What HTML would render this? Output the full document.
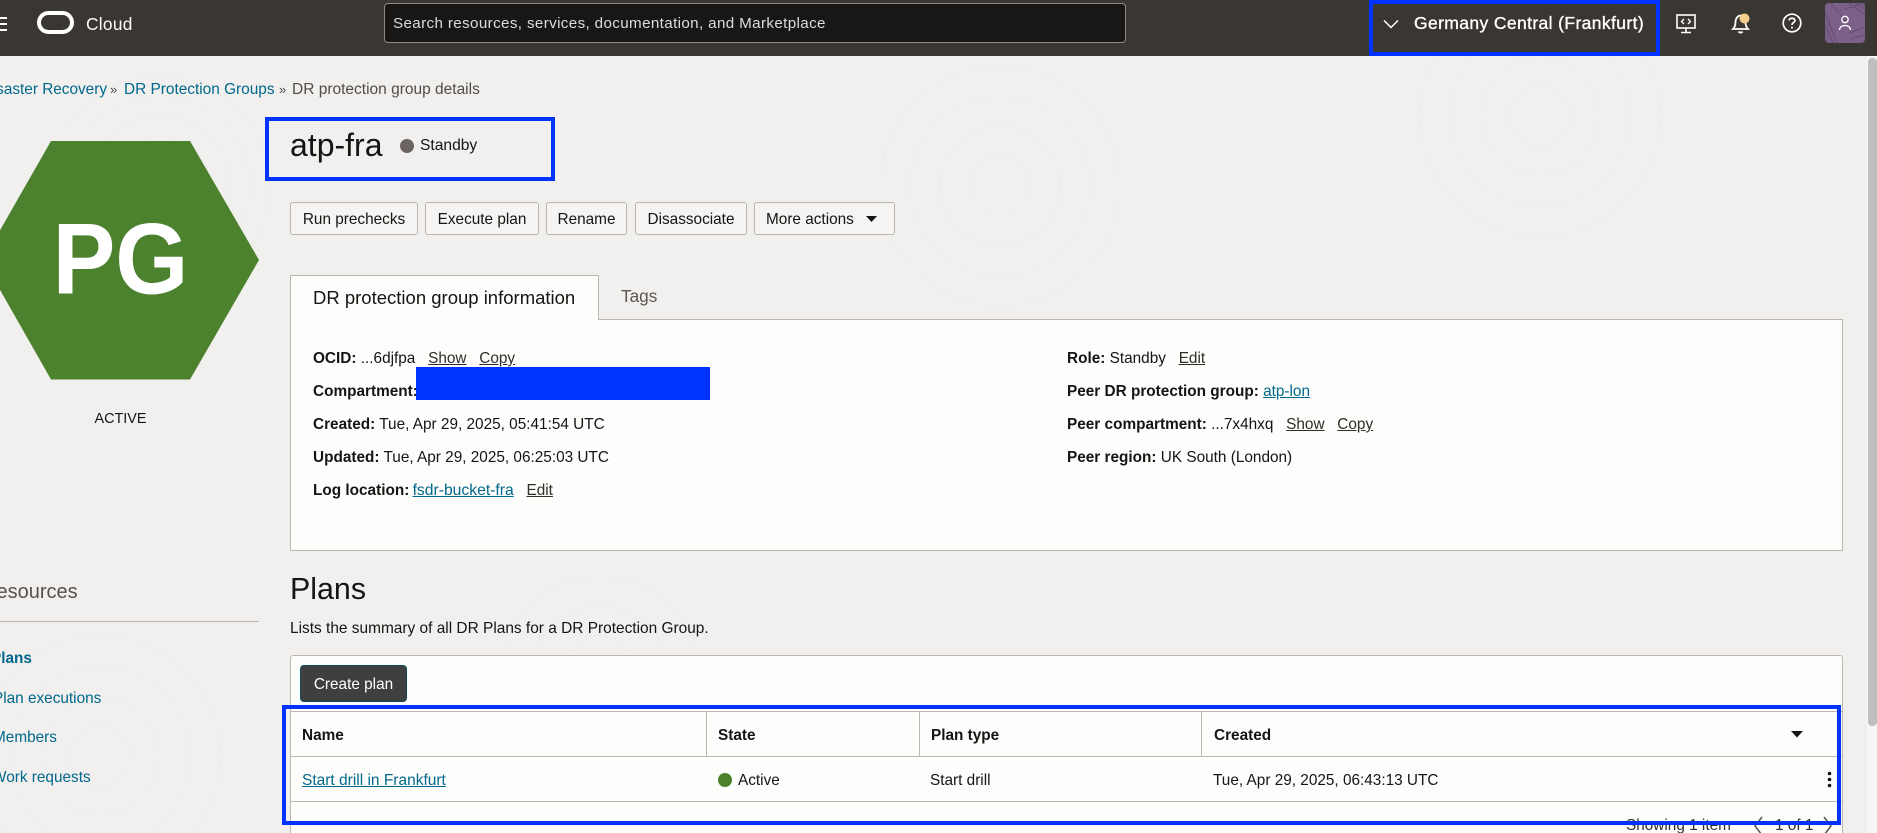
<!DOCTYPE html>
<html lang="en"><head><meta charset="utf-8"><title>DR protection group details</title>
<style>
html,body{margin:0;padding:0;width:1877px;height:833px;overflow:hidden;background:#f1f0ee}
body{position:relative;font-family:"Liberation Sans",sans-serif;font-size:15.35px;color:#161513}
.a{position:absolute;white-space:nowrap}
.t{position:absolute;white-space:nowrap;line-height:20px;height:20px}
b{font-weight:700}
a{color:#00688c;text-decoration:underline}
a.g{color:#312d2a;margin-left:8.5px}
.btn{position:absolute;box-sizing:border-box;top:202px;height:33px;background:#f5f4f2;border:1px solid #b9b5b0;border-radius:3px;text-align:center;line-height:34px;white-space:nowrap}
.blue{position:absolute;box-sizing:border-box;border:4px solid #0033ff}
.s{color:#00688c}
</style></head><body>
<svg class="a" style="left:0;top:56px" width="1867" height="777" fill="none" stroke="#eeedeb" stroke-width="1.5">
<g><circle cx="160" cy="130" r="30"/><circle cx="160" cy="130" r="50"/><circle cx="160" cy="130" r="70"/><circle cx="160" cy="130" r="90"/><circle cx="160" cy="130" r="110"/></g>
<g><circle cx="100" cy="700" r="30"/><circle cx="100" cy="700" r="60"/><circle cx="100" cy="700" r="90"/><circle cx="100" cy="700" r="120"/></g>
<g><circle cx="1000" cy="130" r="30"/><circle cx="1000" cy="130" r="60"/><circle cx="1000" cy="130" r="90"/><circle cx="1000" cy="130" r="120"/></g>
<g><circle cx="1540" cy="60" r="30"/><circle cx="1540" cy="60" r="60"/><circle cx="1540" cy="60" r="90"/><circle cx="1540" cy="60" r="120"/></g>
<g><circle cx="600" cy="620" r="40"/><circle cx="600" cy="620" r="70"/><circle cx="600" cy="620" r="100"/></g>
</svg>

<!-- header -->
<div class="a" style="left:0;top:0;width:1877px;height:56px;background:#3a3632"></div>
<div class="a" style="left:0;top:17px;width:7px;height:2px;background:#fff"></div>
<div class="a" style="left:0;top:23px;width:7px;height:2px;background:#fff"></div>
<div class="a" style="left:0;top:29px;width:7px;height:2px;background:#fff"></div>
<div class="a" style="left:37px;top:11px;width:37px;height:23px;box-sizing:border-box;border:4.5px solid #fff;border-radius:12px"></div>
<div class="t" style="left:86px;top:14px;color:#fff;font-size:17.3px;letter-spacing:.3px">Cloud</div>
<div class="a" style="left:384px;top:3px;width:742px;height:40px;box-sizing:border-box;background:#181716;border:1px solid #8d8985;border-radius:4px"></div>
<div class="t" style="left:393px;top:14px;color:#dedcda;font-size:15.2px;letter-spacing:.36px">Search resources, services, documentation, and Marketplace</div>
<svg class="a" style="left:1383px;top:18px" width="16" height="12" fill="none" stroke="#fff" stroke-width="1.5"><path d="M1 2.5 L8 9.5 L15 2.5"/></svg>
<div class="t" style="left:1414px;top:13px;color:#fff;font-size:17.5px;font-weight:400;letter-spacing:.38px;-webkit-text-stroke:.35px #fff">Germany Central (Frankfurt)</div>
<svg class="a" style="left:1675px;top:13px" width="22" height="21" fill="none" stroke="#fff" stroke-width="1.6"><rect x="2" y="2" width="18" height="13"/><path d="M11 15V19M6 19.5H16" /><path d="M9 6 L6.5 8.5 L9 11M13 6 L15.5 8.5 L13 11" stroke-width="1.3"/></svg>
<svg class="a" style="left:1731px;top:13px" width="20" height="22" fill="none" stroke="#fff" stroke-width="1.8"><path d="M2 16 C4 14 4.5 12 4.5 9 C4.5 5.5 7 2.5 9.5 2.5 C12 2.5 14.5 5.5 14.5 9 C14.5 12 15 14 17 16 Z"/><path d="M7.5 18.5 C8.5 20 10.5 20 11.5 18.5"/><circle cx="13.5" cy="5.5" r="5" fill="#f5cf8a" stroke="none"/></svg>
<svg class="a" style="left:1781px;top:12px" width="22" height="22" fill="none" stroke="#fff" stroke-width="1.7"><circle cx="11" cy="11" r="8.8"/><path d="M8 8.5 C8 5.5 14 5.5 14 8.5 C14 10.5 11 10.5 11 13"/><circle cx="11" cy="15.6" r="1" fill="#fff" stroke="none"/></svg>
<svg class="a" style="left:1825px;top:3px" width="40" height="40"><rect width="40" height="40" rx="4" fill="#7c6089"/><g fill="none" stroke="#6c5179" stroke-width="1.5"><path d="M0 10 L12 40M0 22 L8 40M6 0 L22 20M24 0 L40 12M30 0 L40 6M24 30 L40 24M26 36 L40 32M20 6 L40 0"/></g><g fill="none" stroke="#fff" stroke-width="1.3"><circle cx="20" cy="16.5" r="3.2"/><path d="M14.5 27 C14.5 21 25.5 21 25.5 27"/></g></svg>
<div class="blue" style="left:1369px;top:0;width:291px;height:56px"></div>

<!-- scrollbar -->
<div class="a" style="left:1867px;top:56px;width:10px;height:777px;background:#f6f6f5"></div>
<div class="a" style="left:1868px;top:58px;width:9px;height:668px;background:#bfbfbf;border-radius:4px"></div>

<!-- breadcrumb -->
<div class="a" style="left:0;top:80px;width:107px;height:20px;overflow:hidden"><span class="a" style="right:0;top:0;line-height:20px;color:#00688c">Disaster Recovery</span></div>
<div class="t" style="left:110px;top:80px;color:#4a4a48;font-size:13px">»</div>
<div class="t" style="left:124px;top:80px;color:#00688c;font-size:15.4px">DR Protection Groups</div>
<div class="t" style="left:279px;top:80px;color:#4a4a48;font-size:13px">»</div>
<div class="t" style="left:292px;top:80px;color:#504c49;font-size:15.5px">DR protection group details</div>

<!-- hexagon -->
<svg class="a" style="left:0;top:141px" width="260" height="239"><polygon points="-17,119 51,0 190,0 259,119 190,238.5 51,238.5" fill="#4c822e"/></svg>
<div class="a" style="left:0;top:200px;width:241px;text-align:center;line-height:118px;font-size:94px;font-weight:700;color:#fff;transform:scaleY(1.08)">PG</div>
<div class="a" style="left:0;top:409px;width:241px;text-align:center;line-height:20px;font-size:14.4px">ACTIVE</div>

<!-- title -->
<div class="a" style="left:290px;top:125px;line-height:40px;font-size:32px">atp-fra</div>
<div class="a" style="left:400px;top:139px;width:14px;height:14px;border-radius:50%;background:#6b6460"></div>
<div class="t" style="left:420px;top:136px;font-size:15.6px">Standby</div>
<div class="blue" style="left:265px;top:117px;width:290px;height:64px"></div>

<!-- buttons -->
<div class="btn" style="left:290px;width:128px">Run prechecks</div>
<div class="btn" style="left:425px;width:114px">Execute plan</div>
<div class="btn" style="left:546px;width:81px">Rename</div>
<div class="btn" style="left:635px;width:112px">Disassociate</div>
<div class="btn" style="left:754px;width:141px;text-align:left;padding-left:11px">More actions</div>
<svg class="a" style="left:866px;top:216px" width="11" height="7"><path d="M0 0H11L5.5 6Z" fill="#161513"/></svg>

<!-- info panel -->
<div class="a" style="left:290px;top:319px;width:1553px;height:232px;box-sizing:border-box;background:#fdfdfb;border:1px solid #bcb6b1"></div>
<div class="a" style="left:290px;top:275px;width:309px;height:45px;box-sizing:border-box;background:#fdfdfb;border:1px solid #bcb6b1;border-bottom:0"></div>
<div class="t" style="left:313px;top:288px;font-size:18.5px">DR protection group information</div>
<div class="t" style="left:621px;top:286px;font-size:17.2px;color:#5a5652">Tags</div>

<div class="t" style="left:313px;top:349px"><b>OCID:</b> ...6djfpa <a class="g">Show</a> <a class="g">Copy</a></div>
<div class="t" style="left:313px;top:382px"><b>Compartment:</b></div>
<div class="a" style="left:416px;top:367px;width:294px;height:33px;background:#0033ff"></div>
<div class="t" style="left:313px;top:415px"><b>Created:</b> Tue, Apr 29, 2025, 05:41:54 UTC</div>
<div class="t" style="left:313px;top:448px"><b>Updated:</b> Tue, Apr 29, 2025, 06:25:03 UTC</div>
<div class="t" style="left:313px;top:481px"><b>Log location:</b> <a style="font-size:15.7px;margin-left:-1px">fsdr-bucket-fra</a> <a class="g">Edit</a></div>

<div class="t" style="left:1067px;top:349px"><b>Role:</b> Standby <a class="g">Edit</a></div>
<div class="t" style="left:1067px;top:382px"><b>Peer DR protection group:</b> <a>atp-lon</a></div>
<div class="t" style="left:1067px;top:415px"><b>Peer compartment:</b> ...7x4hxq <a class="g">Show</a> <a class="g">Copy</a></div>
<div class="t" style="left:1067px;top:448px"><b>Peer region:</b> UK South (London)</div>

<!-- sidebar -->
<div class="a" style="left:-18px;top:580px;line-height:24px;font-size:20px;color:#55514d">Resources</div>
<div class="a" style="left:0;top:621px;width:259px;height:1px;background:#b9b5b0"></div>
<div class="t s" style="left:-9px;top:649px;font-weight:700">Plans</div>
<div class="t s" style="left:-7px;top:689px">Plan executions</div>
<div class="t s" style="left:-7px;top:728px">Members</div>
<div class="t s" style="left:-8px;top:768px">Work requests</div>

<!-- plans -->
<div class="a" style="left:290px;top:571px;line-height:36px;font-size:30.4px">Plans</div>
<div class="t" style="left:290px;top:619px;font-size:15.45px">Lists the summary of all DR Plans for a DR Protection Group.</div>

<div class="a" style="left:290px;top:655px;width:1553px;height:178px;box-sizing:border-box;background:#fdfdfb;border:1px solid #bcb6b1;border-bottom:0;border-radius:3px 3px 0 0"></div>
<div class="a" style="left:300px;top:665px;width:107px;height:37px;box-sizing:border-box;background:#3f3f3e;border:1.5px solid #0e4a5c;border-radius:4px;color:#fff;text-align:center;line-height:37px">Create plan</div>

<div class="a" style="left:291px;top:711px;width:1551px;height:1px;background:#bcb6b1"></div>
<div class="a" style="left:291px;top:756px;width:1551px;height:1px;background:#bcb6b1"></div>
<div class="a" style="left:291px;top:801px;width:1551px;height:1px;background:#bcb6b1"></div>
<div class="a" style="left:706px;top:712px;width:1px;height:44px;background:#bcb6b1"></div>
<div class="a" style="left:919px;top:712px;width:1px;height:44px;background:#bcb6b1"></div>
<div class="a" style="left:1201px;top:712px;width:1px;height:44px;background:#bcb6b1"></div>
<div class="t" style="left:302px;top:726px"><b>Name</b></div>
<div class="t" style="left:718px;top:726px"><b>State</b></div>
<div class="t" style="left:931px;top:726px"><b>Plan type</b></div>
<div class="t" style="left:1214px;top:726px"><b>Created</b></div>
<svg class="a" style="left:1791px;top:731px" width="12" height="7"><path d="M0 0H12L6 6.5Z" fill="#161513"/></svg>
<div class="t" style="left:302px;top:771px;font-size:15.5px"><a>Start drill in Frankfurt</a></div>
<div class="a" style="left:718px;top:773px;width:14px;height:14px;border-radius:50%;background:#4c822e"></div>
<div class="t" style="left:738px;top:771px">Active</div>
<div class="t" style="left:930px;top:771px">Start drill</div>
<div class="t" style="left:1213px;top:771px">Tue, Apr 29, 2025, 06:43:13 UTC</div>
<svg class="a" style="left:1827px;top:771px" width="5" height="17" fill="#161513"><circle cx="2.5" cy="2.5" r="1.8"/><circle cx="2.5" cy="8.5" r="1.8"/><circle cx="2.5" cy="14.5" r="1.8"/></svg>

<div class="a" style="left:1600px;top:810px;width:260px;height:23px;overflow:hidden">
<div class="t" style="left:26px;top:6px;color:#312d2a">Showing 1 item</div>
<div class="t" style="left:175px;top:6px;color:#312d2a">1 of 1</div>
</div>
<svg class="a" style="left:1752px;top:815px" width="13" height="18" fill="none" stroke="#5a5652" stroke-width="1.5"><path d="M10 2 L3 11 L10 20"/></svg>
<svg class="a" style="left:1821px;top:815px" width="13" height="18" fill="none" stroke="#5a5652" stroke-width="1.5"><path d="M3 2 L10 11 L3 20"/></svg>
<div class="blue" style="left:282px;top:705px;width:1559px;height:120px"></div>
</body></html>
